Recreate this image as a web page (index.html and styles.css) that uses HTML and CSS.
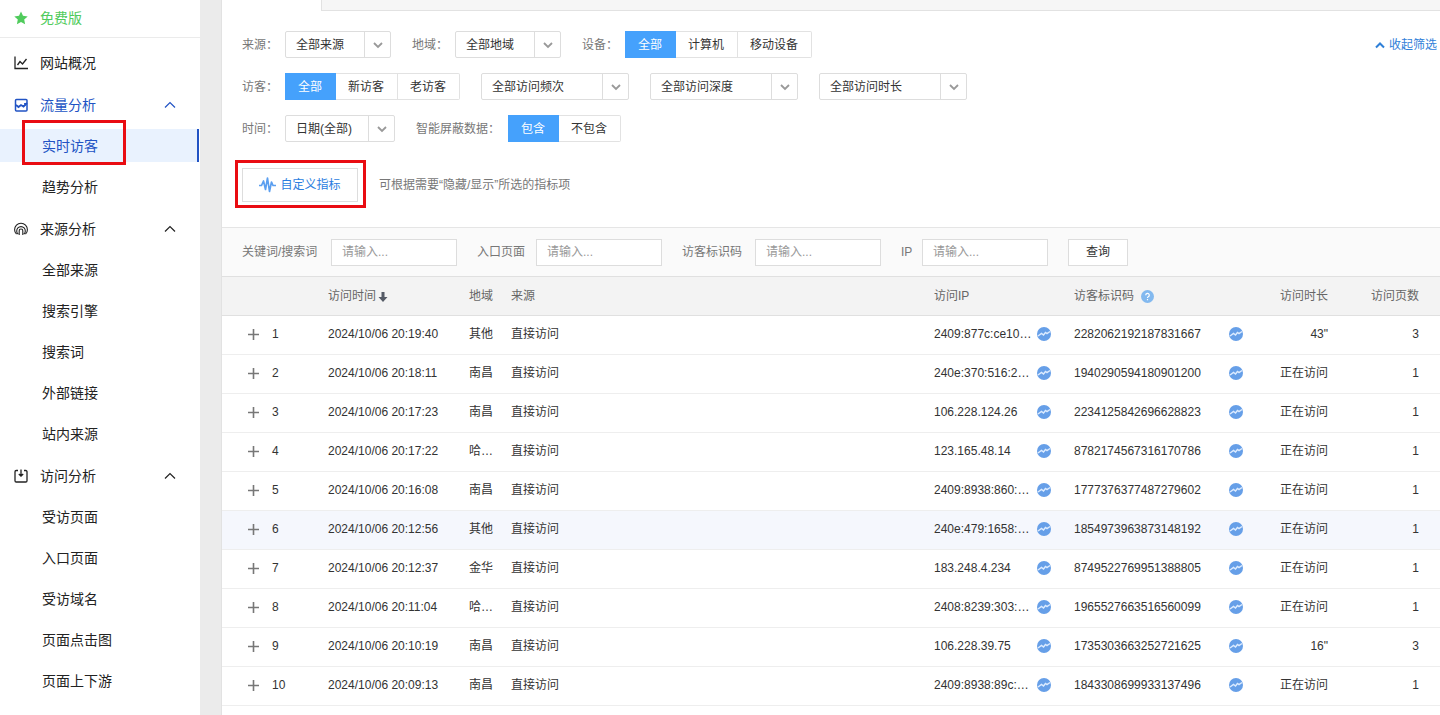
FILE: index.html
```html
<!DOCTYPE html>
<html lang="zh-CN">
<head>
<meta charset="utf-8">
<meta name="viewport" content="width=device-width, initial-scale=1">
<title>实时访客</title>
<link rel="stylesheet" href="styles.css">
</head>
<body>

<svg class="defs" width="0" height="0">
  <symbol id="up" viewBox="0 0 12 8"><path d="M1 6.5 6 1.5l5 5" fill="none" stroke="currentColor" stroke-width="1.2"/></symbol>
  <symbol id="down" viewBox="0 0 12 8"><path d="M2 2l4 4 4-4" fill="none" stroke="currentColor" stroke-width="1.8"/></symbol>
  <symbol id="trend" viewBox="0 0 14 14"><circle cx="7" cy="7" r="7" fill="#669fe8"/><path d="M1 9 4.500 6.500l2 1.500 2-2.500 1.500 1L13 4.500" fill="none" stroke="#dcebff" stroke-width="1.500"/></symbol>
</svg>

<div class="layout">
  <nav class="sidebar">
    <div class="version">
      <svg width="14" height="14" viewBox="0 0 14 14"><path d="M7 .5l2 4.300 4.700.600-3.500 3.200.900 4.700L7 11l-4.100 2.300.9-4.700L.3 5.400 5 4.800z" fill="currentColor"/></svg>
      <span>免费版</span>
    </div>

    <ul class="menu">
      <li><a class="item" href="#">
        <svg width="14" height="14" viewBox="0 0 14 14"><path d="M1 .5v12h13M3.500 9l2.500-3.500L8.500 8l4-5" fill="none" stroke="currentColor" stroke-width="1.300"/></svg>
        网站概况</a></li>
    </ul>

    <ul class="menu">
      <li><a class="item open" href="#">
        <svg width="14" height="14" viewBox="0 0 14 14"><rect x="1.500" y="1.500" width="11.500" height="11.500" rx="1" fill="none" stroke="currentColor" stroke-width="1.500"/><path d="M2 7l2.500 2 2.500-2 2.500 1.500L13 5M11 5v3" fill="none" stroke="currentColor" stroke-width="1.800"/></svg>
        流量分析<svg class="caret" width="12" height="8"><use href="#up"/></svg></a></li>
      <li><a class="item sub active" href="#">实时访客</a></li>
      <li><a class="item sub" href="#">趋势分析</a></li>
    </ul>

    <ul class="menu">
      <li><a class="item" href="#">
        <svg width="14" height="14" viewBox="0 0 14 14"><path d="M2.500 12.200a6.400 6.400 0 1 1 9 0M4.200 12.200a4.300 4.300 0 1 1 5.600 0M5.200 13V8.800a1.800 1.800 0 0 1 3.600 0V13" fill="none" stroke="currentColor" stroke-width="1.100"/></svg>
        来源分析<svg class="caret" width="12" height="8"><use href="#up"/></svg></a></li>
      <li><a class="item sub" href="#">全部来源</a></li>
      <li><a class="item sub" href="#">搜索引擎</a></li>
      <li><a class="item sub" href="#">搜索词</a></li>
      <li><a class="item sub" href="#">外部链接</a></li>
      <li><a class="item sub" href="#">站内来源</a></li>
    </ul>

    <ul class="menu">
      <li><a class="item" href="#">
        <svg width="14" height="14" viewBox="0 0 14 14"><path d="M4 1.500H2.200a1.200 1.200 0 0 0-1.200 1.200v9.100A1.200 1.200 0 0 0 2.200 13h9.600a1.200 1.200 0 0 0 1.200-1.200V2.700a1.200 1.200 0 0 0-1.200-1.200H10M7 .5v6.500M4.800 5 7 7l2.200-2" fill="none" stroke="currentColor" stroke-width="1.300"/></svg>
        访问分析<svg class="caret" width="12" height="8"><use href="#up"/></svg></a></li>
      <li><a class="item sub" href="#">受访页面</a></li>
      <li><a class="item sub" href="#">入口页面</a></li>
      <li><a class="item sub" href="#">受访域名</a></li>
      <li><a class="item sub" href="#">页面点击图</a></li>
      <li><a class="item sub" href="#">页面上下游</a></li>
    </ul>
  </nav>

  <main class="main">
    <div class="tabs"><div class="tab"></div><div class="tab-rest"></div></div>

    <div class="filters">
      <div class="filter-row">
        <div class="field">
          <label for="source">来源：</label>
          <div class="select"><select id="source"><option>全部来源</option></select><span class="arrow"><svg width="12" height="8"><use href="#down"/></svg></span></div>
        </div>
        <div class="field">
          <label for="area">地域：</label>
          <div class="select"><select id="area"><option>全部地域</option></select><span class="arrow"><svg width="12" height="8"><use href="#down"/></svg></span></div>
        </div>
        <div class="field">
          <span class="label">设备：</span>
          <div class="segment"><button class="on">全部</button><button>计算机</button><button>移动设备</button></div>
        </div>
        <a class="collapse" href="#"><svg width="12" height="8" viewBox="0 0 12 8"><path d="M2 6.500l4-4 4 4" fill="none" stroke="currentColor" stroke-width="2"/></svg>收起筛选</a>
      </div>

      <div class="filter-row">
        <div class="field">
          <span class="label">访客：</span>
          <div class="segment"><button class="on">全部</button><button>新访客</button><button>老访客</button></div>
        </div>
        <div class="select wide"><select aria-label="访问频次"><option>全部访问频次</option></select><span class="arrow"><svg width="12" height="8"><use href="#down"/></svg></span></div>
        <div class="select wide"><select aria-label="访问深度"><option>全部访问深度</option></select><span class="arrow"><svg width="12" height="8"><use href="#down"/></svg></span></div>
        <div class="select wide"><select aria-label="访问时长"><option>全部访问时长</option></select><span class="arrow"><svg width="12" height="8"><use href="#down"/></svg></span></div>
      </div>

      <div class="filter-row">
        <div class="field">
          <label for="date">时间：</label>
          <div class="select date"><select id="date"><option>日期(全部)</option></select><span class="arrow"><svg width="12" height="8"><use href="#down"/></svg></span></div>
        </div>
        <div class="field">
          <span class="label long">智能屏蔽数据：</span>
          <div class="segment"><button class="on">包含</button><button>不包含</button></div>
        </div>
      </div>

      <div class="custom">
        <button class="custom-btn">
          <svg width="17" height="16" viewBox="0 0 17 16"><path d="M0 8.500h2.500L4.500 4l2 8.500L8.500 1l2 13.500L12.500 5l1.500 3.500h3" fill="none" stroke="#5b9ff0" stroke-width="1.700" stroke-linejoin="round"/></svg>
          自定义指标
        </button>
        <span class="hint">可根据需要“隐藏/显示”所选的指标项</span>
      </div>
    </div>

    <form class="search">
      <div class="field"><label class="w-keyword" for="keyword">关键词/搜索词</label><input id="keyword" type="text" placeholder="请输入..."></div>
      <div class="field"><label class="w-entry" for="entry">入口页面</label><input id="entry" type="text" placeholder="请输入..."></div>
      <div class="field"><label class="w-visitor" for="visitor">访客标识码</label><input id="visitor" type="text" placeholder="请输入..."></div>
      <div class="field"><label class="w-ip" for="ip">IP</label><input id="ip" type="text" placeholder="请输入..."></div>
      <button type="button">查询</button>
    </form>

    <table class="visits">
      <colgroup>
        <col class="c-no"><col class="c-time"><col class="c-area"><col>
        <col class="c-ip"><col class="c-id"><col class="c-duration"><col class="c-pages">
      </colgroup>
      <thead>
        <tr>
          <th></th>
          <th>访问时间<svg class="sort" width="10" height="12" viewBox="0 0 10 12"><path d="M3.500 1h3v5H9.500L5 11 .5 6h3z" fill="#555b66"/></svg></th>
          <th>地域</th>
          <th>来源</th>
          <th>访问IP</th>
          <th>访客标识码<svg class="help" width="13" height="13" viewBox="0 0 13 13"><circle cx="6.500" cy="6.500" r="6.500" fill="#83b9ef"/><path d="M4.700 5.200a1.800 1.800 0 1 1 2.600 1.600c-.6.300-.8.600-.8 1.200M6.500 9v1.300" fill="none" stroke="#fff" stroke-width="1.200"/></svg></th>
          <th class="num">访问时长</th>
          <th class="num">访问页数</th>
        </tr>
      </thead>
      <tbody id="rows"></tbody>
    </table>
  </main>
</div>

<script src="script.js"></script>
</body>
</html>
```
FILE: styles.css
```css
*,
*::after {
  box-sizing: border-box;
}

body {
  margin: 0;
  font: 12px/18px "Liberation Sans", "Noto Sans CJK SC", sans-serif;
  color: #333;
  background: #ebebeb;
}

button, input, select {
  font: inherit;
  color: inherit;
}

button {
  cursor: pointer;
}

a {
  color: inherit;
  text-decoration: none;
}

.defs {
  position: absolute;
}

.layout {
  display: flex;
  min-height: 100vh;
}

/* sidebar */
.sidebar {
  flex: none;
  width: 200px;
  margin-right: 21px;
  background: #fff;
  font-size: 14px;
}

.version {
  display: flex;
  align-items: center;
  gap: 12px;
  height: 38px;
  margin-bottom: 8px;
  padding: 0 0 2px 14px;
  border-bottom: 1px solid #ebebeb;
  color: #50cb5c;
}

.menu {
  list-style: none;
  margin: 0;
  padding: 0 0 1px;
}

.item {
  display: flex;
  align-items: center;
  height: 33px;
  margin: 0 1px 8px 0;
  padding: 0 23px 0 14px;
  color: #222;
}

.item svg:first-child {
  margin-right: 12px;
}

.item.open {
  color: #2153c4;
}

.item.sub {
  padding-left: 42px;
}

.item.active {
  position: relative;
  color: #2153c4;
  background: #e9f2fe;
  border-right: 2px solid #2153c4;
}

.item .caret {
  margin-left: auto;
}

.item.active::after,
.custom-btn::after {
  content: "";
  position: absolute;
  border: 3px solid #e90c12;
  pointer-events: none;
}

.item.active::after {
  left: 22px;
  top: -9px;
  width: 104px;
  height: 45px;
}

/* filters */
.main {
  flex: 1;
  min-width: 0;
  background: #fff;
  border-left: 1px solid #e2e2e2;
}

.tabs {
  display: flex;
  height: 11px;
}

.tab {
  width: 99px;
}

.tab-rest {
  flex: 1;
  background: #f6f6f6;
  border-left: 1px solid #e2e2e2;
  border-bottom: 1px solid #e2e2e2;
}

.filters {
  display: flex;
  flex-direction: column;
  gap: 15px;
  padding: 20px 3px 25px 20px;
}

.filter-row {
  display: flex;
  align-items: center;
  gap: 21px;
}

.field {
  display: flex;
  align-items: center;
}

.field label,
.field .label {
  width: 43px;
  color: #777;
}

.field .long {
  width: 92px;
}

.select {
  position: relative;
  width: 106px;
  height: 27px;
}

.select.date {
  width: 110px;
}

.select.wide {
  width: 148px;
}

.select select {
  appearance: none;
  width: 100%;
  height: 27px;
  padding: 0 30px 0 10px;
  border: 1px solid #ddd;
  border-radius: 2px;
  background: #fff;
}

.arrow {
  position: absolute;
  top: 1px;
  right: 1px;
  bottom: 1px;
  width: 26px;
  display: flex;
  align-items: center;
  justify-content: center;
  border-left: 1px solid #ddd;
  color: #999;
  pointer-events: none;
}

.segment {
  display: flex;
}

.segment button {
  height: 27px;
  padding: 0 13px 0 12px;
  border: 1px solid #e2e2e2;
  border-left: 0;
  background: #fff;
}

.segment .on {
  border: 1px solid #45a1fc;
  background: #45a1fc;
  color: #fff;
}

.segment button:last-child {
  border-radius: 0 2px 2px 0;
}

.collapse {
  display: flex;
  align-items: center;
  gap: 3px;
  margin-left: auto;
  color: #2f80d8;
}

.custom {
  display: flex;
  align-items: center;
  gap: 21px;
  margin-top: 11px;
  color: #777;
}

.custom-btn {
  position: relative;
  display: flex;
  align-items: center;
  justify-content: center;
  gap: 4px;
  width: 116px;
  height: 34px;
  padding: 0;
  border: 1px solid #ddd;
  background: #fff;
  color: #2b7de0;
}

.custom-btn::after {
  inset: -9px -9px -7px -8px;
}

/* search */
.search {
  display: flex;
  align-items: center;
  gap: 20px;
  height: 49px;
  padding-left: 20px;
  border-top: 1px solid #e5e5e5;
  background: #fafafa;
}

.search input {
  width: 126px;
  height: 27px;
  padding: 0 10px;
  border: 1px solid #ddd;
  background: #fff;
}

.search input::placeholder {
  color: #999;
}

.search button {
  width: 60px;
  height: 27px;
  padding: 0;
  border: 1px solid #ddd;
  background: #fff;
}

.search .w-keyword { width: 89px; }
.search .w-entry { width: 59px; }
.search .w-visitor { width: 73px; }
.search .w-ip { width: 21px; }

/* table */
.visits {
  width: 100%;
  table-layout: fixed;
  border-collapse: collapse;
}

.visits th,
.visits td {
  height: 39px;
  padding: 0;
  text-align: left;
  white-space: nowrap;
}

.visits th {
  border-top: 1px solid #e0e0e0;
  border-bottom: 1px solid #e0e0e0;
  background: #f3f3f3;
  color: #666;
  font-weight: 400;
}

.visits td {
  padding-bottom: 3px;
  border-bottom: 1px solid #eee;
}

.visits .hover {
  background: #f5f7fd;
}

.visits .num {
  text-align: right;
}

.visits .num:last-child {
  padding-right: 21px;
}

.c-no { width: 106px; }
.c-time { width: 141px; }
.c-area { width: 42px; }
.c-ip { width: 140px; }
.c-id { width: 180px; }
.c-duration { width: 74px; }
.c-pages { width: 112px; }

.expand {
  width: 11px;
  height: 11px;
  margin: 0 13px 0 26px;
  padding: 0;
  border: 0;
  background: none;
  vertical-align: middle;
}

.expand svg {
  display: block;
}

.cell {
  display: flex;
  align-items: center;
}

.cell span {
  width: 103px;
}

.cell .id {
  width: 155px;
}

.sort,
.help {
  vertical-align: middle;
}

.sort {
  margin-left: 2px;
}

.help {
  margin-left: 7px;
}
```
FILE: script.js
```js
var visits = [
  ["2024/10/06 20:19:40", "其他", "2409:877c:ce10…", "2282062192187831667", "43\"", 3],
  ["2024/10/06 20:18:11", "南昌", "240e:370:516:2…", "1940290594180901200", "正在访问", 1],
  ["2024/10/06 20:17:23", "南昌", "106.228.124.26", "2234125842696628823", "正在访问", 1],
  ["2024/10/06 20:17:22", "哈…", "123.165.48.14", "8782174567316170786", "正在访问", 1],
  ["2024/10/06 20:16:08", "南昌", "2409:8938:860:…", "1777376377487279602", "正在访问", 1],
  ["2024/10/06 20:12:56", "其他", "240e:479:1658:…", "1854973963873148192", "正在访问", 1],
  ["2024/10/06 20:12:37", "金华", "183.248.4.234", "8749522769951388805", "正在访问", 1],
  ["2024/10/06 20:11:04", "哈…", "2408:8239:303:…", "1965527663516560099", "正在访问", 1],
  ["2024/10/06 20:10:19", "南昌", "106.228.39.75", "1735303663252721625", "16\"", 3],
  ["2024/10/06 20:09:13", "南昌", "2409:8938:89c:…", "1843308699933137496", "正在访问", 1]
];

var plus = '<button class="expand" aria-label="展开"><svg width="11" height="11" viewBox="0 0 11 11"><path d="M5.5 0v11M0 5.5h11" stroke="#777" stroke-width="1.6"/></svg></button>';
var trend = '<svg width="14" height="14"><use href="#trend"/></svg>';

var html = "";
for (var i = 0; i < visits.length; i++) {
  var v = visits[i];
  html += '<tr' + (i == 5 ? ' class="hover"' : '') + '>' +
    '<td>' + plus + (i + 1) + '</td>' +
    '<td>' + v[0] + '</td>' +
    '<td>' + v[1] + '</td>' +
    '<td>直接访问</td>' +
    '<td><div class="cell"><span>' + v[2] + '</span>' + trend + '</div></td>' +
    '<td><div class="cell"><span class="id">' + v[3] + '</span>' + trend + '</div></td>' +
    '<td class="num">' + v[4] + '</td>' +
    '<td class="num">' + v[5] + '</td></tr>';
}
document.getElementById("rows").innerHTML = html;
```
